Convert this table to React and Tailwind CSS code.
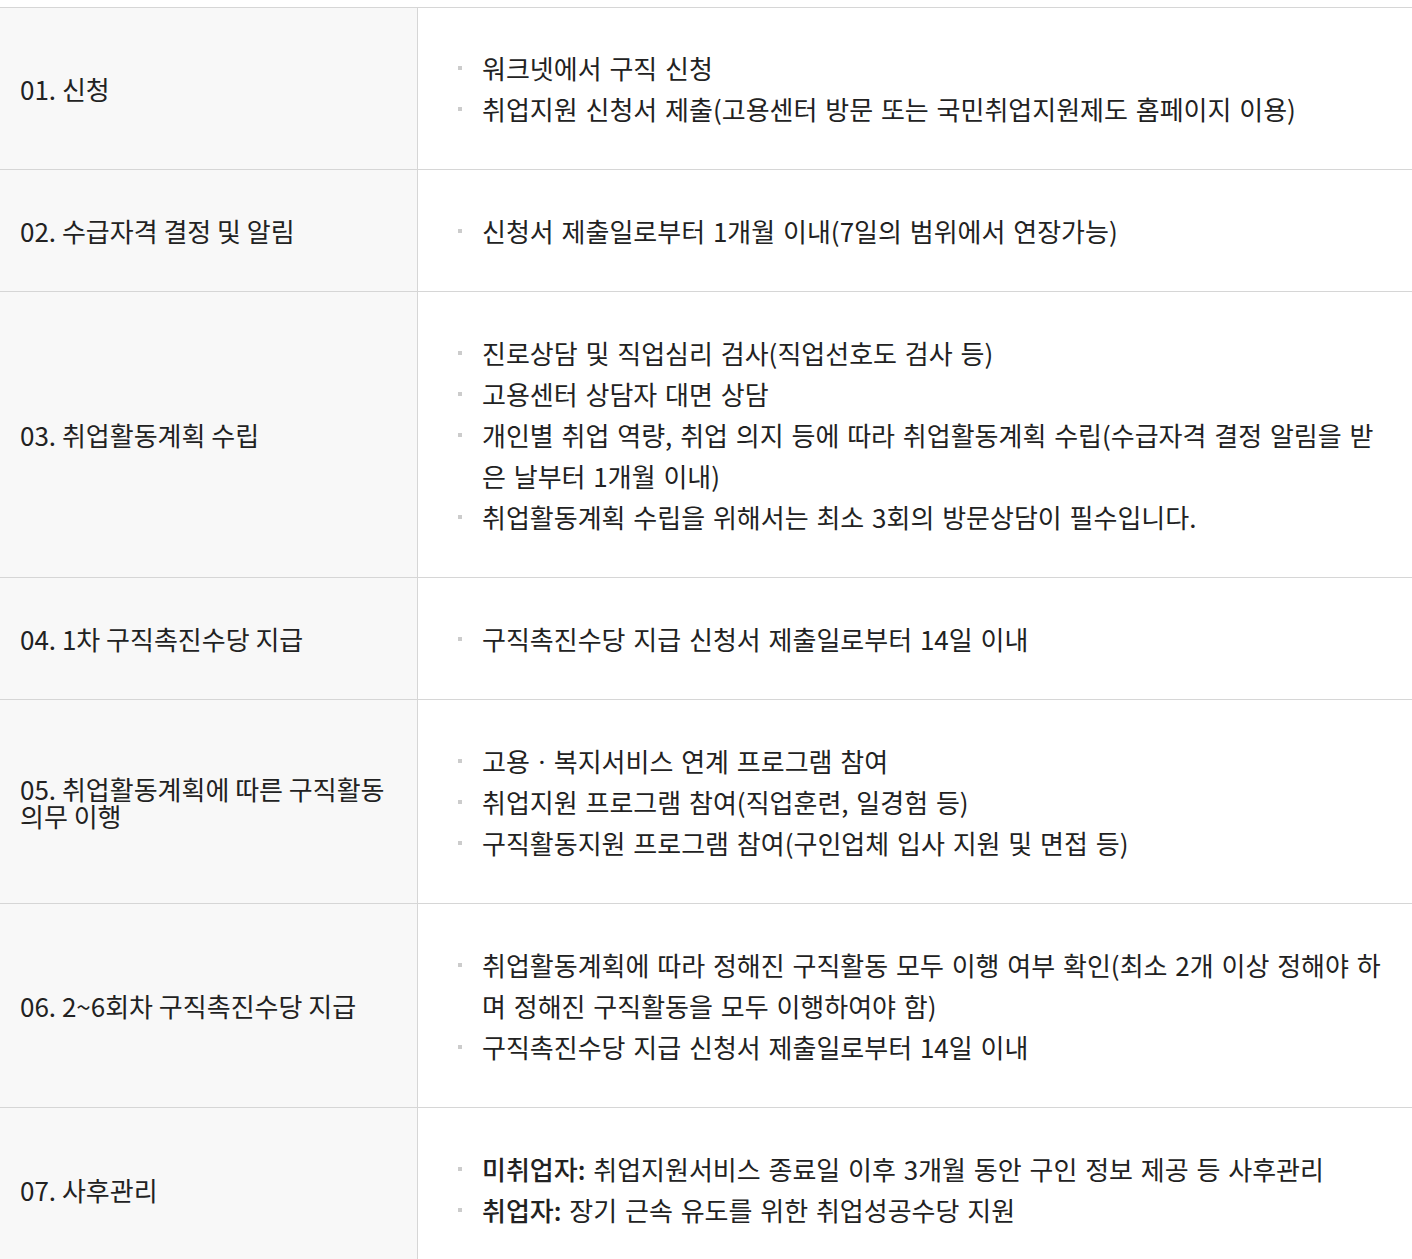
const rows = [
  { title: '01. 신청', items: ['워크넷에서 구직 신청', '취업지원 신청서 제출(고용센터 방문 또는 국민취업지원제도 홈페이지 이용)'] },
  { title: '02. 수급자격 결정 및 알림', items: ['신청서 제출일로부터 1개월 이내(7일의 범위에서 연장가능)'] },
  {
    title: '03. 취업활동계획 수립',
    items: [
      '진로상담 및 직업심리 검사(직업선호도 검사 등)',
      '고용센터 상담자 대면 상담',
      '개인별 취업 역량, 취업 의지 등에 따라 취업활동계획 수립(수급자격 결정 알림을 받은 날부터 1개월 이내)',
      '취업활동계획 수립을 위해서는 최소 3회의 방문상담이 필수입니다.',
    ],
  },
  { title: '04. 1차 구직촉진수당 지급', items: ['구직촉진수당 지급 신청서 제출일로부터 14일 이내'] },
  {
    title: '05. 취업활동계획에 따른 구직활동 의무 이행',
    items: ['고용ㆍ복지서비스 연계 프로그램 참여', '취업지원 프로그램 참여(직업훈련, 일경험 등)', '구직활동지원 프로그램 참여(구인업체 입사 지원 및 면접 등)'],
  },
  {
    title: '06. 2~6회차 구직촉진수당 지급',
    items: ['취업활동계획에 따라 정해진 구직활동 모두 이행 여부 확인(최소 2개 이상 정해야 하며 정해진 구직활동을 모두 이행하여야 함)', '구직촉진수당 지급 신청서 제출일로부터 14일 이내'],
  },
  {
    title: '07. 사후관리',
    items: [
      { b: '미취업자:', t: ' 취업지원서비스 종료일 이후 3개월 동안 구인 정보 제공 등 사후관리' },
      { b: '취업자:', t: ' 장기 근속 유도를 위한 취업성공수당 지원' },
    ],
  },
];

export default function App() {
  return (
    <div className="bg-white pt-[7px] text-[#222] font-['Noto_Sans_CJK_KR','Noto_Sans',sans-serif]">
      <div className="border-t border-[#d6d6d6]">
        {rows.map((row, i) => (
          <div key={i} className="flex border-b border-[#d6d6d6]">
            <div className="w-[418px] shrink-0 bg-[#f8f8f8] border-r border-[#d6d6d6] flex items-center px-5 text-[26px] leading-[27px]">
              <span>{row.title}</span>
            </div>
            <ul className={`flex-1 pb-10 pl-10 pr-5 text-[26px] leading-[41px] [word-spacing:2px] break-all ${i === 0 ? 'pt-[39px]' : 'pt-10'}`}>
              {row.items.map((it, j) => (
                <li key={j} className="relative pl-6">
                  <span className="absolute left-0 top-[19px] w-1 h-1 bg-[#cccccc]" />
                  {typeof it === 'string' ? it : (<><b className="font-medium">{it.b}</b>{it.t}</>)}
                </li>
              ))}
            </ul>
          </div>
        ))}
      </div>
    </div>
  );
}
